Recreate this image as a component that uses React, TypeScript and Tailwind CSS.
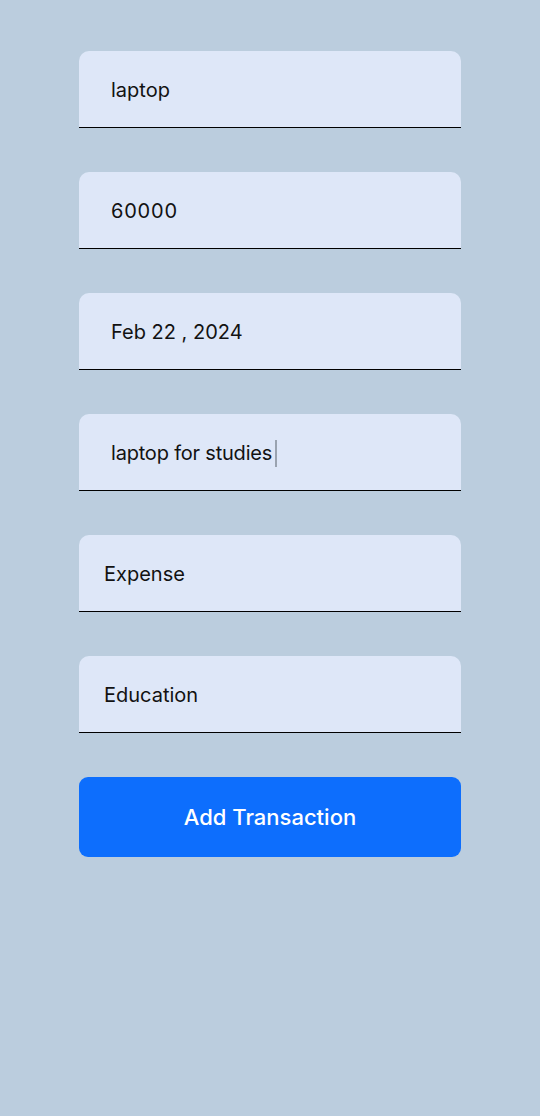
import React from "react";

const fieldCls =
  "h-[77px] bg-[#dee7f8] rounded-t-[10px] border-b border-black flex items-center pt-[2px] text-[20px] text-[#121212]";

export default function App() {
  return (
    <div
      className="min-h-[1116px] w-full bg-[#bbcdde]"
      style={{ fontFamily: 'Inter, "Liberation Sans", Arial, sans-serif' }}
    >
      <div className="mx-[79px] w-[382px] pt-[51px] flex flex-col gap-[44px]">
        <div className={`${fieldCls} pl-[32px]`}>laptop</div>
        <div className={`${fieldCls} pl-[32px] tracking-[0.04em]`}>60000</div>
        <div className={`${fieldCls} pl-[32px]`}>Feb 22 , 2024</div>
        <div className={`${fieldCls} pl-[32px]`}>
          <span className="tracking-[-0.01em]">laptop for studies</span>
          <span className="ml-[3px] inline-block w-[1.5px] h-[27px] bg-[#9aa3b0]" />
        </div>
        <div className={`${fieldCls} pl-[25px]`}>Expense</div>
        <div className={`${fieldCls} pl-[25px]`}>Education</div>
        <button className="h-[80px] w-full rounded-[9px] bg-[#0d6efd] text-white text-[22px] font-medium flex items-center justify-center">
          Add Transaction
        </button>
      </div>
    </div>
  );
}
